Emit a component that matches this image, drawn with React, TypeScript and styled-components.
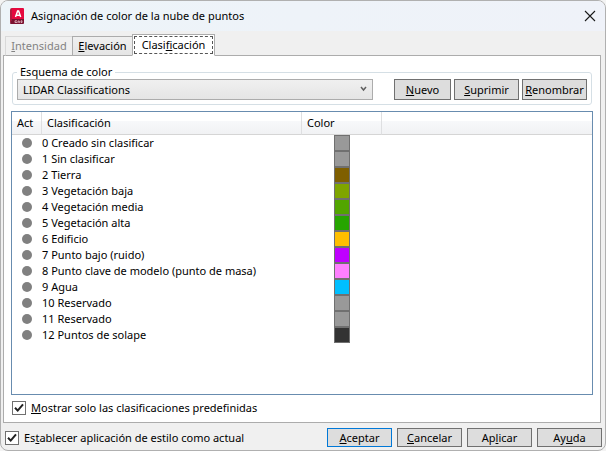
import React, { useState } from "react";
import styled, { createGlobalStyle } from "styled-components";

const GlobalStyle = createGlobalStyle`
  * { box-sizing: border-box; }
  body {
    margin: 0;
    background: #f3f3f3;
    color: #000;
    font: 11px/16px "Noto Sans", "Open Sans", sans-serif;
  }
  button, select, input { font: inherit; color: inherit; }
`;

const Dialog = styled.main`
  display: flex;
  flex-direction: column;
  min-height: 100vh;
  overflow: hidden;
  background: #f0f0f0;
  border: 1px solid #b0b0b0;
  border-radius: 8px;
`;

const TitleBar = styled.header`
  display: flex;
  align-items: center;
  gap: 6px;
  height: 30px;
  padding: 0 9px 0 9px;
  background: linear-gradient(90deg, #edf4f9, #eff2f9);
`;

const Title = styled.h1`
  flex: 1;
  margin: 0;
  font-size: 11px;
  font-weight: 400;
`;

const CloseButton = styled.button`
  display: flex;
  padding: 0;
  border: 0;
  background: none;
`;

const Tabs = styled.div`
  display: flex;
  align-items: flex-end;
  height: 25px;
  margin: 0 4px -1px;
`;

const Tab = styled.button<{ $width: number }>`
  position: relative;
  width: ${(p) => p.$width}px;
  height: 20px;
  padding: 0;
  margin-right: -1px;
  white-space: nowrap;
  border: 1px solid #acacac;
  background: linear-gradient(#f0f0f0, #e5e5e5);

  &:disabled {
    color: #838383;
    border-color: #d9d9d9;
    border-bottom-color: #acacac;
    background: #f0f0f0;
  }

  &[aria-selected="true"] {
    height: 22px;
    padding-bottom: 1px;
    background: #fff;
    border-bottom-color: #fff;
    z-index: 1;
    outline: 1px dashed #555;
    outline-offset: -3px;
  }
`;

const Panel = styled.section`
  flex: 1;
  display: flex;
  flex-direction: column;
  gap: 6px;
  margin: 0 4px 0 2px;
  padding: 9px 7px 7px;
  border: 1px solid #acacac;
  background: #fff;
`;

const Scheme = styled.fieldset`
  min-width: 0;
  margin: 0 1px;
  padding: 0 4px 4px;
  border: 1px solid #d5dfe5;
  border-radius: 3px;
`;

const Legend = styled.legend`
  padding: 0 3px;
  line-height: 14px;
`;

const SchemeRow = styled.div`
  display: flex;
  gap: 3px;
`;

const SelectBox = styled.div`
  position: relative;
  flex: 1;
  margin-right: 18px;

  svg {
    position: absolute;
    right: 6px;
    top: 7px;
    pointer-events: none;
  }
`;

const Select = styled.select`
  display: block;
  width: 100%;
  height: 21px;
  padding: 0 20px 0 5px;
  appearance: none;
  border: 1px solid #acacac;
  border-radius: 0;
  background: linear-gradient(#f0f0f0, #e5e5e5);
`;

const Button = styled.button<{ $width?: number; $primary?: boolean }>`
  width: ${(p) => p.$width ?? 65}px;
  height: 21px;
  padding: 0;
  white-space: nowrap;
  border: 1px solid ${(p) => (p.$primary ? "#0078d7" : "#707070")};
  background: #ddd;
`;

const ListView = styled.div`
  flex: 1;
  border: 1px solid #688caf;
  background: #fff;
`;

const Table = styled.table`
  width: 100%;
  table-layout: fixed;
  border-collapse: separate;
  border-spacing: 0;
`;

const HeaderCell = styled.th<{ $width?: number }>`
  width: ${(p) => (p.$width ? `${p.$width}px` : "auto")};
  height: 23px;
  padding: 0 0 0 5px;
  font-weight: 400;
  text-align: left;
  border-bottom: 1px solid #d5d5d5;
  border-right: ${(p) => (p.$width ? "1px solid #dedfe1" : "0")};
  background: linear-gradient(#fff 0 40%, #f7f8fa 41%, #f1f2f4);
`;

const Cell = styled.td`
  height: 16px;
  padding: 0;
  line-height: 16px;
  white-space: nowrap;
`;

const Dot = styled.span`
  display: block;
  width: 10px;
  height: 10px;
  margin-left: 10px;
  border-radius: 50%;
  background: #808080;
`;

const Swatch = styled.span<{ $color: string }>`
  display: block;
  width: 16px;
  height: 16px;
  margin-left: 32px;
  border: 1px solid #707070;
  background: ${(p) => p.$color};
`;

const Check = styled.label`
  display: flex;
  align-items: center;
  gap: 5px;
  height: 14px;
  white-space: nowrap;
`;

const CheckBox = styled.span`
  display: grid;
  width: 14px;
  height: 14px;

  > * { grid-area: 1 / 1; }
  svg { pointer-events: none; visibility: hidden; }
  input:checked + svg { visibility: visible; }
`;

const CheckInput = styled.input`
  width: 14px;
  height: 14px;
  margin: 0;
  appearance: none;
  border: 1px solid #707070;
  background: #fff;
`;

const PanelCheck = styled(Check)`
  margin-left: 1px;
`;

const Footer = styled.footer`
  display: flex;
  align-items: center;
  justify-content: space-between;
  padding: 5px 3px 3px 4px;
`;

const Actions = styled.div`
  display: flex;
  gap: 5px;
`;

const ActionButton = styled(Button)`
  height: 19px;
`;

const classes: [string, string][] = [
  ["0 Creado sin clasificar", "#999999"],
  ["1 Sin clasificar", "#999999"],
  ["2 Tierra", "#7f5f00"],
  ["3 Vegetación baja", "#7fa500"],
  ["4 Vegetación media", "#52a500"],
  ["5 Vegetación alta", "#26a500"],
  ["6 Edificio", "#ffbf00"],
  ["7 Punto bajo (ruido)", "#bf00ff"],
  ["8 Punto clave de modelo (punto de masa)", "#ff7fff"],
  ["9 Agua", "#00bfff"],
  ["10 Reservado", "#999999"],
  ["11 Reservado", "#999999"],
  ["12 Puntos de solape", "#333333"],
];

const AppIcon = () => (
  <svg width="15" height="17" viewBox="0 0 15 17" aria-hidden="true">
    <path d="M2 0H13Q14 0 14 1V12H2Z" fill="#e5093f" />
    <path d="M2 0V12L0 15V2Q0 0 2 0Z" fill="#b3193d" />
    <path d="M2 11H14V15Q14 16 13 16H1Q0 16 0 15Z" fill="#7a1230" />
    <path d="M5.5 9L7.6 3H8.6L10.7 9M6.3 7.2H10" fill="none" stroke="#fff" strokeWidth="1.5" />
    <path d="M7 12.8H5V14.5H7M8 15V13H9.3V15M11 12.8V14.5H12V12.8Z" fill="none" stroke="#e8c3cd" strokeWidth="0.8" />
  </svg>
);

function CheckField({ children }: { children: React.ReactNode }) {
  const [on, setOn] = useState(true);
  return (
    <>
      <CheckBox>
        <CheckInput type="checkbox" checked={on} onChange={() => setOn(!on)} />
        <svg width="14" height="14" viewBox="0 0 14 14" aria-hidden="true">
          <path d="M3 6.7L5.7 9.6L11 3.3" fill="none" stroke="#212121" strokeWidth="2" />
        </svg>
      </CheckBox>
      <span>{children}</span>
    </>
  );
}

export default function App() {
  return (
    <>
      <GlobalStyle />
      <Dialog>
        <TitleBar>
          <AppIcon />
          <Title>Asignación de color de la nube de puntos</Title>
          <CloseButton aria-label="Cerrar">
            <svg width="12" height="12" viewBox="0 0 12 12">
              <path d="M1 1L11 11M11 1L1 11" stroke="#1a1a1a" strokeWidth="1.1" />
            </svg>
          </CloseButton>
        </TitleBar>
        <Tabs role="tablist">
          <Tab role="tab" $width={68} disabled><u>I</u>ntensidad</Tab>
          <Tab role="tab" $width={61}><u>E</u>levación</Tab>
          <Tab role="tab" $width={83} aria-selected="true">Clasi<u>f</u>icación</Tab>
        </Tabs>
        <Panel>
          <Scheme>
            <Legend>Esquema de color</Legend>
            <SchemeRow>
              <SelectBox>
                <Select aria-label="Esquema de color">
                  <option>LIDAR Classifications</option>
                </Select>
                <svg width="7" height="6" viewBox="0 0 7 6" aria-hidden="true">
                  <path d="M1 1L3.5 4L6 1" fill="none" stroke="#606060" strokeWidth="1.5" />
                </svg>
              </SelectBox>
              <Button $width={57}><u>N</u>uevo</Button>
              <Button><u>S</u>uprimir</Button>
              <Button><u>R</u>enombrar</Button>
            </SchemeRow>
          </Scheme>
          <ListView>
            <Table>
              <thead>
                <tr>
                  <HeaderCell $width={30}>Act</HeaderCell>
                  <HeaderCell $width={260}>Clasificación</HeaderCell>
                  <HeaderCell $width={80}>Color</HeaderCell>
                  <HeaderCell as="td" />
                </tr>
              </thead>
              <tbody>
                {classes.map(([name, color]) => (
                  <tr key={name}>
                    <Cell><Dot /></Cell>
                    <Cell>{name}</Cell>
                    <Cell><Swatch $color={color} /></Cell>
                    <Cell />
                  </tr>
                ))}
              </tbody>
            </Table>
          </ListView>
          <PanelCheck>
            <CheckField><u>M</u>ostrar solo las clasificaciones predefinidas</CheckField>
          </PanelCheck>
        </Panel>
        <Footer>
          <Check>
            <CheckField>Es<u>t</u>ablecer aplicación de estilo como actual</CheckField>
          </Check>
          <Actions>
            <ActionButton $primary><u>A</u>ceptar</ActionButton>
            <ActionButton><u>C</u>ancelar</ActionButton>
            <ActionButton>Ap<u>l</u>icar</ActionButton>
            <ActionButton>Ay<u>u</u>da</ActionButton>
          </Actions>
        </Footer>
      </Dialog>
    </>
  );
}
